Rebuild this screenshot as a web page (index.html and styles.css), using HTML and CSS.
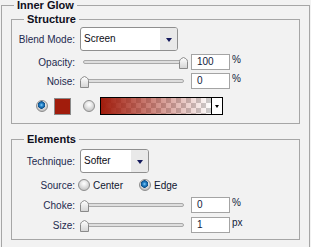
FILE: index.html
```html
<!DOCTYPE html>
<html lang="en">
<head>
  <meta charset="UTF-8">
  <title>Inner Glow</title>
  <link rel="stylesheet" href="styles.css">
</head>
<body>
  <fieldset class="group">
    <legend>Inner Glow</legend>

    <fieldset class="box box-structure">
      <legend>Structure</legend>
      <div class="row row-select">
        <span class="label">Blend Mode:</span>
        <div class="select select-wide"><span class="select-value">Screen</span><span class="select-arrow"></span></div>
      </div>
      <div class="row">
        <span class="label">Opacity:</span>
        <div class="slider">
          <div class="track"></div>
          <svg class="thumb thumb-max" width="9" height="12" viewBox="0 0 9 12"><defs><linearGradient id="tg" x1="0" y1="0" x2="0" y2="1"><stop offset="0" stop-color="#fff"/><stop offset="1" stop-color="#d4d4d4"/></linearGradient></defs><path d="M0.5 11.5V4.5Q0.5 2.8 2.2 1.6L4.5 0.5L6.8 1.6Q8.5 2.8 8.5 4.5V11.5Z" fill="url(#tg)" stroke="#8a8a8a"/></svg>
        </div>
        <div class="field">100</div><span class="unit">%</span>
      </div>
      <div class="row">
        <span class="label">Noise:</span>
        <div class="slider">
          <div class="track"></div>
          <svg class="thumb" width="9" height="12" viewBox="0 0 9 12"><path d="M0.5 11.5V4.5Q0.5 2.8 2.2 1.6L4.5 0.5L6.8 1.6Q8.5 2.8 8.5 4.5V11.5Z" fill="url(#tg)" stroke="#8a8a8a"/></svg>
        </div>
        <div class="field">0</div><span class="unit">%</span>
      </div>
      <div class="row row-colour">
        <span class="radio on"></span>
        <span class="swatch"></span>
        <span class="radio radio-gap"></span>
        <div class="gradient"><span class="gradient-fill"></span><span class="gradient-arrow"></span></div>
      </div>
    </fieldset>

    <fieldset class="box box-elements">
      <legend>Elements</legend>
      <div class="row row-select">
        <span class="label">Technique:</span>
        <div class="select select-narrow"><span class="select-value">Softer</span><span class="select-arrow"></span></div>
      </div>
      <div class="row row-source">
        <span class="label">Source:</span>
        <span class="radio"></span><span class="radio-text">Center</span>
        <span class="radio on"></span><span class="radio-text">Edge</span>
      </div>
      <div class="row">
        <span class="label">Choke:</span>
        <div class="slider">
          <div class="track"></div>
          <svg class="thumb" width="9" height="12" viewBox="0 0 9 12"><path d="M0.5 11.5V4.5Q0.5 2.8 2.2 1.6L4.5 0.5L6.8 1.6Q8.5 2.8 8.5 4.5V11.5Z" fill="url(#tg)" stroke="#8a8a8a"/></svg>
        </div>
        <div class="field">0</div><span class="unit">%</span>
      </div>
      <div class="row">
        <span class="label">Size:</span>
        <div class="slider">
          <div class="track"></div>
          <svg class="thumb" width="9" height="12" viewBox="0 0 9 12"><path d="M0.5 11.5V4.5Q0.5 2.8 2.2 1.6L4.5 0.5L6.8 1.6Q8.5 2.8 8.5 4.5V11.5Z" fill="url(#tg)" stroke="#8a8a8a"/></svg>
        </div>
        <div class="field">1</div><span class="unit">px</span>
      </div>
    </fieldset>
  </fieldset>
</body>
</html>
```

FILE: styles.css
```css
html, body {
  overflow: hidden;
}

body {
  margin: 0;
  background: #f2f2f2;
  font-family: "Liberation Sans", Arial, sans-serif;
  font-size: 10px;
  color: #1d2a4f;
}

fieldset {
  box-sizing: border-box;
  margin: 0;
  min-width: 0;
  border: 1px solid #a6a6a6;
}

legend {
  font-size: 11px;
  font-weight: bold;
  line-height: 11px;
  color: #0e0e1c;
  padding: 0 3px;
}

/* outer group, its bottom edge sits just below the window */
.group {
  width: 309px;
  height: 248px;
  margin-left: 1px;
  padding: 3px 0 0 9px;
}

.group > legend {
  margin-left: 3px;
}

.box {
  width: 289px;
  padding: 2px 0 8px 0;
}

.box > legend {
  margin-left: 12px;
}

.box-elements {
  margin-top: 10px;
  padding: 4px 0 6px 0;
}

/* rows */
.row {
  display: flex;
  align-items: center;
  height: 16px;
  margin-top: 3px;
}

.box-elements .row {
  margin-top: 4px;
}

.row-select,
.box-elements .row-select {
  height: 24px;
  margin-top: 0;
}

.label {
  flex: none;
  width: 63px;
  margin-right: 5px;
  text-align: right;
}

/* dropdown */
.select {
  box-sizing: border-box;
  display: flex;
  height: 24px;
  border: 1px solid #8f8f8f;
  border-radius: 3px;
  background: #fff;
  overflow: hidden;
}

.select-wide {
  width: 98px;
}

.select-narrow {
  width: 69px;
}

.select-value {
  flex: 1;
  padding-left: 3px;
  line-height: 22px;
  color: #0c0c14;
}

.select-arrow {
  width: 17px;
  background: #e9e9e9;
  display: flex;
  align-items: center;
  justify-content: center;
}

.select-arrow::after {
  content: "";
  border-left: 3.5px solid transparent;
  border-right: 3.5px solid transparent;
  border-top: 4px solid #141a5c;
  margin-top: 1px;
}

/* slider */
.slider {
  position: relative;
  display: flex;
  align-items: center;
  width: 108px;
  height: 16px;
  margin-right: 3px;
}

.track {
  flex: 1;
  height: 2px;
  margin: 0 4px 0 3px;
  border: 1px solid #a9a9a9;
  border-radius: 2px;
  background: #dedede;
}

.thumb {
  position: absolute;
  top: 3px;
  left: 0;
}

.thumb-max {
  left: auto;
  right: 0;
}

.field {
  box-sizing: border-box;
  width: 39px;
  height: 16px;
  padding-left: 5px;
  border: 1px solid #a4a4a4;
  background: #fff;
  line-height: 14px;
  color: #101a3a;
}

.unit {
  align-self: flex-start;
  margin-left: 2px;
  line-height: 12px;
  color: #101a3a;
}

/* radios */
.radio {
  box-sizing: border-box;
  flex: none;
  width: 12px;
  height: 12px;
  border: 1px solid #8d8d8d;
  border-radius: 50%;
  background: radial-gradient(circle at 50% 35%, #fff 0, #f0f0f0 2px, #c9c9c9 6px);
}

.radio.on {
  background:
    radial-gradient(circle at 45% 40%, #8fd0f7 0, #2a8ad0 1.5px, #0b4d88 3.5px, rgba(11, 77, 136, 0) 4px),
    radial-gradient(circle at 50% 35%, #fff 0, #eaeaea 3px, #c2c2c2 6px);
}

.row-source .label {
  margin-right: 3px;
}

.radio-text {
  margin: 0 16px 0 3px;
  color: #0e1630;
}

/* colour row */
.row-colour {
  height: 18px;
  margin-top: 8px;
  padding-left: 24px;
}

.swatch {
  box-sizing: border-box;
  width: 17px;
  height: 17px;
  margin-left: 6px;
  border: 1px solid #8a8a8a;
  background: #a11c0c;
}

.radio-gap {
  margin-left: 12px;
}

.gradient {
  box-sizing: border-box;
  display: flex;
  width: 123px;
  height: 18px;
  margin-left: 5px;
  border: 1px solid #000;
}

.gradient-fill {
  flex: 1;
  background:
    linear-gradient(to right, #a11c0c, rgba(161, 28, 12, 0)),
    repeating-conic-gradient(#cdcdcd 0 25%, #fff 0 50%) 0 0 / 10px 10px;
}

.gradient-arrow {
  width: 10px;
  border-left: 1px solid #000;
  background: #fff;
  display: flex;
  align-items: center;
  justify-content: center;
}

.gradient-arrow::after {
  content: "";
  border-left: 2.5px solid transparent;
  border-right: 2.5px solid transparent;
  border-top: 3px solid #000;
}
```
